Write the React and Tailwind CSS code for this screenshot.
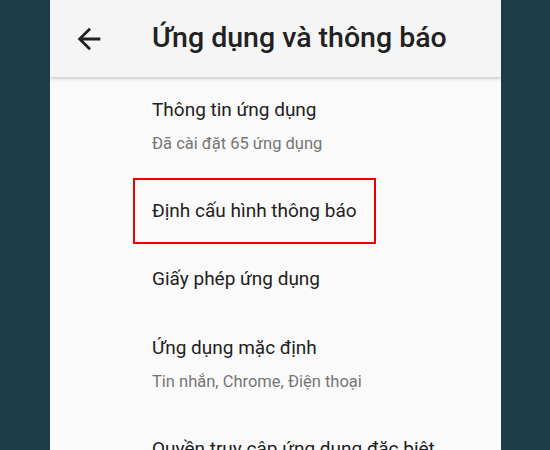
import React from 'react';

const rows = [
  { title: 'Thông tin ứng dụng', sub: 'Đã cài đặt 65 ứng dụng' },
  { title: 'Định cấu hình thông báo', marked: true },
  { title: 'Giấy phép ứng dụng' },
  { title: 'Ứng dụng mặc định', sub: 'Tin nhắn, Chrome, Điện thoại' },
  { title: 'Quyền truy cập ứng dụng đặc biệt' },
];

function BackArrow() {
  return (
    <svg viewBox="0 0 24 24" className="w-[34px] h-[34px] shrink-0" fill="#212121">
      <path d="M20 11H7.83l5.59-5.59L12 4l-8 8 8 8 1.41-1.41L7.83 13H20v-2z" />
    </svg>
  );
}

export default function App() {
  return (
    <div className="w-[550px] h-[450px] overflow-hidden bg-[#1c3d49] font-['Roboto',sans-serif]">
      <div className="ml-[50px] w-[451px] h-full bg-[#fafafa] flex flex-col">
        {/* Toolbar */}
        <div className="h-[77px] shrink-0 bg-[#f5f5f5] flex items-center pl-[22px] gap-[46px] shadow-[0_2px_3px_rgba(0,0,0,0.18)] relative z-10">
          <BackArrow />
          <h1 className="text-[28.5px] font-medium text-[#212121] leading-none">Ứng dụng và thông báo</h1>
        </div>

        {/* Settings list */}
        <div className="flex flex-col">
          {rows.map((row, i) =>
            row.marked ? (
              <div key={i} className="pl-[83px] pt-[2px]">
                <div className="inline-block border-2 border-[#ee0000] px-[17px] py-[19px] text-[19px] leading-[24px] text-[#212121]">
                  {row.title}
                </div>
              </div>
            ) : (
              <div key={i} className={'pl-[102px] pb-[22px] ' + (i === 0 ? 'pt-[21px]' : 'pt-[23px]')}>
                <div className="text-[19px] leading-[24px] text-[#212121] whitespace-nowrap">{row.title}</div>
                {row.sub && (
                  <div className="mt-[12px] text-[16.5px] leading-[20px] text-[#757575]">{row.sub}</div>
                )}
              </div>
            )
          )}
        </div>
      </div>
    </div>
  );
}
